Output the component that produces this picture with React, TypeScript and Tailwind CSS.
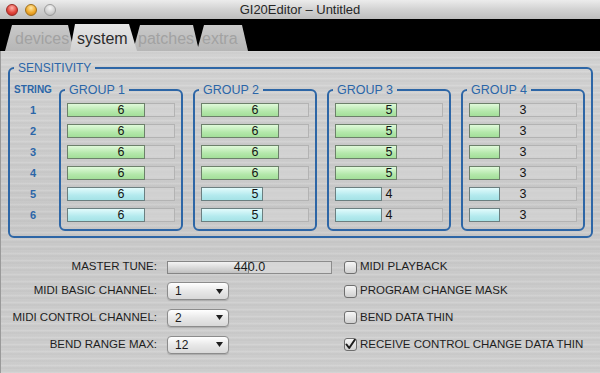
import React from 'react';

const groups = [
  { name: 'GROUP 1', values: [6, 6, 6, 6, 6, 6] },
  { name: 'GROUP 2', values: [6, 6, 6, 6, 5, 5] },
  { name: 'GROUP 3', values: [5, 5, 5, 5, 4, 4] },
  { name: 'GROUP 4', values: [3, 3, 3, 3, 3, 3] },
];

const tabs = [
  { label: 'devices', cls: 'w-[69px] pl-[10px]' },
  { label: 'system', cls: '-ml-[4px] w-[67px] pl-[7px]', active: true },
  { label: 'patches', cls: '-ml-[4px] w-[66px] pl-[5px]' },
  { label: 'extra', cls: '-ml-[2px] w-[51px] pl-[5px]' },
];

function Bar({ value, cyan }: { value: number; cyan: boolean }) {
  // 1..8 scale, fill grows ~15.5px per step
  const fill = Math.round((value - 1) * 15.5);
  return (
    <div className="relative h-[14px] w-[108px] border border-[#b3b3b3] bg-[#d4d4d4]/70">
      <div
        className={
          cyan
            ? 'absolute -top-px -left-px h-[14px] border border-[#6b7f80] bg-[linear-gradient(180deg,#e2fbfc,#b4eaee_60%,#a5e2e6)]'
            : 'absolute -top-px -left-px h-[14px] border border-[#6c806a] bg-[linear-gradient(180deg,#e0fada,#b4e8ab_60%,#a3df99)]'
        }
        style={{ width: fill }}
      />
      <span className="absolute inset-0 flex items-center justify-center text-[12.5px] leading-none text-[#141414]">
        {value}
      </span>
    </div>
  );
}

function Checkbox({ label, checked }: { label: string; checked?: boolean }) {
  return (
    <div className="flex items-center">
      <div className="flex h-[13px] w-[13px] items-center justify-center rounded-[3px] border border-[#6f6f6f] bg-[linear-gradient(180deg,#f6f6f6,#d0d0d0)]">
        {checked && (
          <svg width="11" height="11" viewBox="0 0 11 11">
            <path d="M1.5 5.5 L4.2 9 L9.8 0.8" fill="none" stroke="#1c1c1c" strokeWidth="2" strokeLinecap="round" strokeLinejoin="round" />
          </svg>
        )}
      </div>
      <span className="ml-[3px] text-[11.5px] text-[#1e1e1e]">{label}</span>
    </div>
  );
}

function Select({ value }: { value: string }) {
  return (
    <div className="flex h-[18px] w-[62px] items-center justify-between rounded-[4px] border border-[#8c8c8c] bg-[linear-gradient(180deg,#ffffff,#e8e8e8_50%,#d8d8d8)] pl-[7px] pr-[5px] shadow-[0_1px_1px_rgba(0,0,0,0.15)]">
      <span className="text-[12px] leading-none text-[#1a1a1a]">{value}</span>
      <svg width="7" height="5" viewBox="0 0 7 5">
        <path d="M0 0 L7 0 L3.5 5 Z" fill="#1e1e1e" />
      </svg>
    </div>
  );
}

export default function App() {
  return (
    <div className="flex h-[373px] w-[600px] flex-col overflow-hidden bg-black font-['Liberation_Sans',Arial,sans-serif]">
      {/* title bar */}
      <div className="relative flex h-[19px] items-center bg-[linear-gradient(180deg,#ececec,#d2d2d2_50%,#bdbdbd)]">
        <div className="flex items-center gap-[7px] pl-[6px]">
          <div className="h-[12px] w-[12px] rounded-full border border-[#9a2a24] bg-[radial-gradient(circle_at_50%_30%,#ffb4ac,#e2473e_55%,#b4221c)]" />
          <div className="h-[12px] w-[12px] rounded-full border border-[#a0701a] bg-[radial-gradient(circle_at_50%_30%,#ffe9a6,#f0aa2c_55%,#c47a12)]" />
          <div className="h-[12px] w-[12px] rounded-full border border-[#9c9c9c] bg-[radial-gradient(circle_at_50%_30%,#f6f6f6,#d2d2d2_55%,#b0b0b0)]" />
        </div>
        <div className="absolute inset-0 flex items-center justify-center text-[13px] text-[#262626]">
          GI20Editor – Untitled
        </div>
      </div>

      {/* tabs */}
      <div className="flex h-[32px] items-end bg-black pl-[5px]">
        {tabs.map((t) => (
          <div
            key={t.label}
            className={
              t.active
                ? `relative z-10 flex h-[27px] items-center text-[16px] text-[#2c2c2c] [clip-path:polygon(0_100%,5px_0,calc(100%_-_8px)_0,100%_100%)] bg-[linear-gradient(180deg,#e6e6e6,#d2d2d2)] ${t.cls}`
                : `flex h-[26px] items-center text-[16px] text-[#a2a2a2] [clip-path:polygon(0_100%,7px_0,calc(100%_-_6px)_0,100%_100%)] bg-[linear-gradient(180deg,#c9c9c9,#b6b6b6)] ${t.cls}`
            }
          >
            <span className="pt-[2px]">{t.label}</span>
          </div>
        ))}
      </div>

      {/* brushed panel */}
      <div className="flex-1 border-l border-[#9a9a9a] [background-image:repeating-linear-gradient(0deg,rgba(255,255,255,0.10)_0px,rgba(255,255,255,0.10)_1px,rgba(0,0,0,0.03)_2px,rgba(255,255,255,0)_3px,rgba(0,0,0,0.04)_5px,rgba(255,255,255,0.06)_7px),linear-gradient(180deg,#d4d4d4,#cacaca_50%,#cfcfcf)]">
        <fieldset className="ml-[7px] mt-[10px] w-[585px] rounded-[6px] border-2 border-[#2d66a6] p-0">
          <legend className="ml-[4px] px-[4px] text-[12px] leading-[14px] text-[#2b66a8]">SENSITIVITY</legend>
          <div className="flex pb-[5px] pl-[3px] pr-[6px] pt-[8px]">
            <div className="mr-[6px] flex w-[40px] flex-col items-center">
              <div className="h-[14px] text-[10px] font-bold leading-[14px] text-[#2b66a8]">STRING</div>
              <div className="mt-[6px] flex flex-col gap-[7px]">
                {[1, 2, 3, 4, 5, 6].map((n) => (
                  <div key={n} className="h-[14px] text-center text-[11px] font-bold leading-[14px] text-[#2b66a8]">
                    {n}
                  </div>
                ))}
              </div>
            </div>
            <div className="flex gap-[10px]">
              {groups.map((g) => (
                <fieldset key={g.name} className="w-[124px] rounded-[6px] border-2 border-[#2d66a6] p-0">
                  <legend className="ml-[4px] px-[4px] text-[12.5px] leading-[14px] text-[#2b66a8]">{g.name}</legend>
                  <div className="flex flex-col gap-[7px] px-[6px] pb-[7px] pt-[6px]">
                    {g.values.map((v, i) => (
                      <Bar key={i} value={v} cyan={i >= 4} />
                    ))}
                  </div>
                </fieldset>
              ))}
            </div>
          </div>
        </fieldset>

        <div className="mt-[18px] grid grid-cols-[156px_165px_auto] grid-rows-[22px_26px_27px_27px] items-center gap-x-[10px] text-[11.5px] text-[#1e1e1e]">
          <div className="text-right">MASTER TUNE:</div>
          <div className="relative h-[13px] w-[165px] border border-[#8c8c8c] bg-[#d9d9d9]/80">
            <div className="absolute -top-px -left-px h-[13px] w-[82px] border border-[#858585] bg-[linear-gradient(180deg,#f4f4f4,#d8d8d8_55%,#c0c0c0)]" />
            <span className="absolute inset-0 flex items-center justify-center text-[12.5px] leading-none text-[#1a1a1a]">440.0</span>
          </div>
          <div className="ml-[2px]"><Checkbox label="MIDI PLAYBACK" /></div>

          <div className="text-right">MIDI BASIC CHANNEL:</div>
          <Select value="1" />
          <div className="ml-[2px]"><Checkbox label="PROGRAM CHANGE MASK" /></div>

          <div className="text-right">MIDI CONTROL CHANNEL:</div>
          <Select value="2" />
          <div className="ml-[2px]"><Checkbox label="BEND DATA THIN" /></div>

          <div className="text-right">BEND RANGE MAX:</div>
          <Select value="12" />
          <div className="ml-[2px]"><Checkbox label="RECEIVE CONTROL CHANGE DATA THIN" checked /></div>
        </div>
      </div>
    </div>
  );
}
